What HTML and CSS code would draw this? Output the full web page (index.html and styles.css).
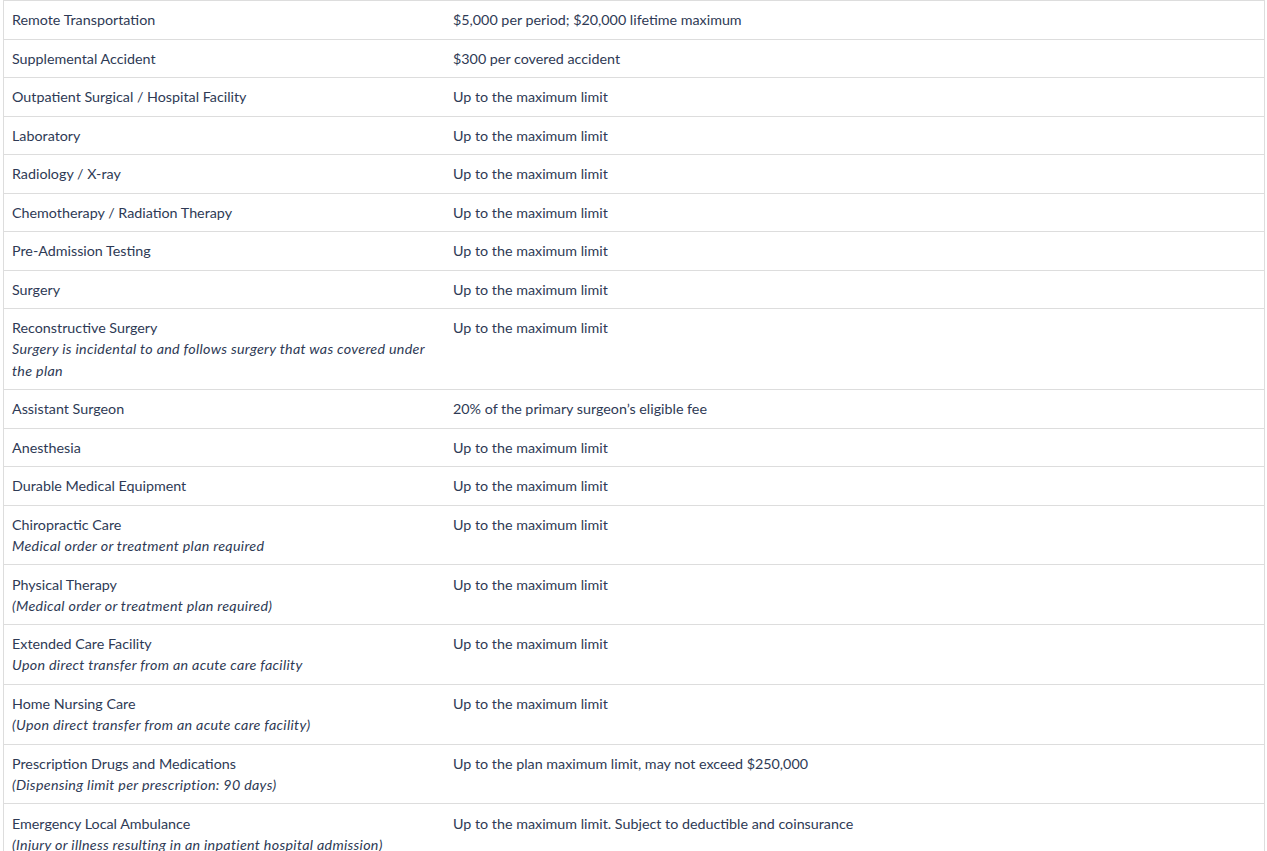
FILE: index.html
```html
<!DOCTYPE html>
<html>
<head>
<meta charset="utf-8">
<link rel="stylesheet" href="styles.css">
</head>
<body>
<div class="wrap">
<table class="benefits">
<tbody>
<tr><td class="name">Remote Transportation</td><td class="val">$5,000 per period; $20,000 lifetime maximum</td></tr>
<tr><td class="name">Supplemental Accident</td><td class="val">$300 per covered accident</td></tr>
<tr><td class="name">Outpatient Surgical / Hospital Facility</td><td class="val">Up to the maximum limit</td></tr>
<tr><td class="name">Laboratory</td><td class="val">Up to the maximum limit</td></tr>
<tr><td class="name">Radiology / X-ray</td><td class="val">Up to the maximum limit</td></tr>
<tr><td class="name">Chemotherapy / Radiation Therapy</td><td class="val">Up to the maximum limit</td></tr>
<tr><td class="name">Pre-Admission Testing</td><td class="val">Up to the maximum limit</td></tr>
<tr><td class="name">Surgery</td><td class="val">Up to the maximum limit</td></tr>
<tr><td class="name">Reconstructive Surgery<br><em>Surgery is incidental to and follows surgery that was covered under the plan</em></td><td class="val">Up to the maximum limit</td></tr>
<tr><td class="name">Assistant Surgeon</td><td class="val">20% of the primary surgeon’s eligible fee</td></tr>
<tr><td class="name">Anesthesia</td><td class="val">Up to the maximum limit</td></tr>
<tr><td class="name">Durable Medical Equipment</td><td class="val">Up to the maximum limit</td></tr>
<tr><td class="name">Chiropractic Care<br><em>Medical order or treatment plan required</em></td><td class="val">Up to the maximum limit</td></tr>
<tr><td class="name">Physical Therapy<br><em>(Medical order or treatment plan required)</em></td><td class="val">Up to the maximum limit</td></tr>
<tr><td class="name">Extended Care Facility<br><em>Upon direct transfer from an acute care facility</em></td><td class="val">Up to the maximum limit</td></tr>
<tr><td class="name">Home Nursing Care<br><em>(Upon direct transfer from an acute care facility)</em></td><td class="val">Up to the maximum limit</td></tr>
<tr><td class="name">Prescription Drugs and Medications<br><em>(Dispensing limit per prescription: 90 days)</em></td><td class="val">Up to the plan maximum limit, may not exceed $250,000</td></tr>
<tr><td class="name">Emergency Local Ambulance<br><em>(Injury or illness resulting in an inpatient hospital admission)</em></td><td class="val">Up to the maximum limit. Subject to deductible and coinsurance</td></tr>
</tbody>
</table>
</div>
</body>
</html>
```
FILE: styles.css
```css
html, body {
  margin: 0;
  padding: 0;
  background: #ffffff;
}
.wrap {
  padding: 0 2px 0 3px;
}
.benefits {
  width: 100%;
  border-collapse: collapse;
  border: 1px solid #dddddd;
  font-family: Lato, "Open Sans", sans-serif;
  font-size: 14.3px;
  line-height: 21px;
  color: #2e3a55;
}
.benefits td {
  border-top: 1px solid #dddddd;
  padding: 8.25px 8px;
  vertical-align: top;
  text-align: left;
}
.benefits td.name {
  width: 425px;
}
.benefits em {
  font-style: italic;
  letter-spacing: 0.3px;
  line-height: 21.25px;
}
```
